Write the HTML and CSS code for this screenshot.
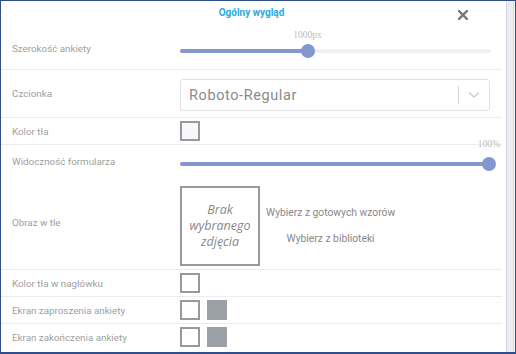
FILE: index.html
```html
<!DOCTYPE html>
<html lang="pl">
<head>
  <meta charset="UTF-8" />
  <title>Ogólny wygląd</title>
  <link rel="stylesheet" href="styles.css">
</head>
<body>

  <div class="dialog">
    <div class="panel">
      <div class="header">
        <span class="title">Ogólny wygląd</span>
        <svg class="close" width="10" height="10" viewBox="0 0 10 10">
          <path d="M1 1 L9 9 M9 1 L1 9" stroke="#777" stroke-width="2.4" stroke-linecap="square"/>
        </svg>
      </div>

      <div class="row row-width">
        <div class="label">Szerokość ankiety</div>
        <div class="slider">
          <div class="track"><div class="fill" style="width: 41%"></div></div>
          <span class="thumb" style="left: 41%"></span>
          <span class="value" style="left: 41%">1000px</span>
        </div>
      </div>

      <div class="row row-font">
        <div class="label">Czcionka</div>
        <div class="select">
          <span class="select-text">Roboto-Regular</span>
          <span class="select-sep"></span>
          <svg class="chevron" width="12" height="8" viewBox="0 0 12 8">
            <path d="M1 1.5 L6 6 L11 1.5" fill="none" stroke="#c8c8c8" stroke-width="1.3"/>
          </svg>
        </div>
      </div>

      <div class="row row-small">
        <div class="label">Kolor tła</div>
        <div class="checks"><span class="check light"></span></div>
      </div>

      <div class="row row-opacity no-line">
        <div class="label">Widoczność formularza</div>
        <div class="slider">
          <div class="track"><div class="fill" style="width: 100%"></div></div>
          <span class="thumb" style="left: 99.4%"></span>
          <span class="value end">100%</span>
        </div>
      </div>

      <div class="row row-image">
        <div class="label">Obraz w tle</div>
        <div class="image-pick">
          <div class="image-box">Brak wybranego zdjęcia</div>
          <div class="image-links">
            <a href="#">Wybierz z gotowych wzorów</a>
            <a href="#">Wybierz z biblioteki</a>
          </div>
        </div>
      </div>

      <div class="row row-small">
        <div class="label">Kolor tła w nagłówku</div>
        <div class="checks"><span class="check"></span></div>
      </div>

      <div class="row row-small">
        <div class="label">Ekran zaproszenia ankiety</div>
        <div class="checks"><span class="check"></span><span class="swatch"></span></div>
      </div>

      <div class="row row-small no-line">
        <div class="label">Ekran zakończenia ankiety</div>
        <div class="checks"><span class="check"></span><span class="swatch"></span></div>
      </div>
    </div>

    <div class="scrollbar"></div>
  </div>

</body>
</html>
```

FILE: styles.css
```css
body {
  margin: 0;
  font-family: Roboto, 'Noto Sans', sans-serif;
  background: #fff;
}

.dialog {
  width: 516px;
  height: 354px;
  box-sizing: border-box;
  border: 1px solid #2e4d8b;
  border-bottom-width: 2px;
  display: flex;
  background: #fff;
  overflow: hidden;
}

.panel {
  flex: 1;
  padding-right: 4px;
}

.header {
  height: 24px;
  position: relative;
  text-align: center;
}

.title {
  display: inline-block;
  margin-top: 5px;
  font-size: 10px;
  font-weight: bold;
  color: #2aa9df;
}

.close {
  position: absolute;
  left: 457px;
  top: 9px;
}

.row {
  display: flex;
  align-items: center;
  border-bottom: 1px solid #ececec;
}

.row.no-line {
  border-bottom: none;
}

.label {
  width: 167px;
  padding-left: 11px;
  flex-shrink: 0;
  font-size: 9.8px;
  color: #a0a0a0;
}

.row-width {
  height: 44px;
}

.row-width .label {
  margin-top: 2px;
}

.row-font {
  height: 47px;
}

.row-small {
  height: 26px;
}

.row-opacity {
  height: 37px;
}

.row-opacity .label {
  margin-top: -4px;
}

.row-image {
  height: 87px;
}

.row-image .label {
  margin-top: -6px;
}

/* slider */
.slider {
  position: relative;
  width: 311px;
  height: 14px;
  margin-left: 1px;
  margin-top: 8px;
}

.track {
  position: absolute;
  top: 5px;
  left: 0;
  right: 0;
  height: 4px;
  border-radius: 2px;
  background: #f0f0f0;
}

.fill {
  height: 100%;
  border-radius: 2px;
  background: #8597d1;
}

.thumb {
  position: absolute;
  top: 0;
  width: 14px;
  height: 14px;
  margin-left: -7px;
  border-radius: 50%;
  background: #8597d1;
}

.value {
  position: absolute;
  top: -14px;
  transform: translateX(-50%);
  font-family: 'Liberation Serif', serif;
  font-size: 9.5px;
  color: #bdbdbd;
}

.value.end {
  left: auto;
  right: -9px;
  top: -18px;
  transform: none;
}

.row-opacity .slider {
  margin-top: 0;
}

/* select */
.select {
  width: 310px;
  height: 32px;
  box-sizing: border-box;
  margin-left: 1px;
  margin-top: 3px;
  border: 1px solid #e0e0e0;
  border-radius: 3px;
  display: flex;
  align-items: center;
}

.select-text {
  flex: 1;
  padding-left: 8px;
  font-size: 14.5px;
  letter-spacing: 0.6px;
  color: #8a8a8a;
}

.select-sep {
  width: 1px;
  height: 18px;
  background: #d6d6d6;
}

.chevron {
  margin: 0 9px 0 9px;
}

/* checkboxes */
.checks {
  display: flex;
  gap: 7px;
  margin-left: 1px;
}

.check,
.swatch {
  width: 20px;
  height: 20px;
  box-sizing: border-box;
}

.check {
  border: 2px solid #999;
  background: #fff;
}

.check.light {
  background: #f6f8fc;
}

.swatch {
  background: #9aa0a5;
}

/* background image */
.image-pick {
  display: flex;
  align-items: center;
  margin-left: 1px;
}

.image-box {
  width: 80px;
  height: 80px;
  box-sizing: border-box;
  border: 2px solid #999;
  display: flex;
  align-items: center;
  justify-content: center;
  text-align: center;
  padding: 0 6px;
  font-family: 'Open Sans', sans-serif;
  font-style: italic;
  font-size: 12.5px;
  line-height: 16px;
  color: #888;
}

.image-links {
  display: flex;
  flex-direction: column;
  align-items: center;
  gap: 13px;
  margin-left: 6px;
  margin-top: 0;
}

.image-links a {
  font-size: 10.3px;
  color: #888;
  text-decoration: none;
}

.scrollbar {
  width: 6px;
  margin-right: 1px;
  border-left: 1px solid #d8d8e2;
  border-right: 1px solid #d8d8e2;
  background: #ececf2;
}
```
